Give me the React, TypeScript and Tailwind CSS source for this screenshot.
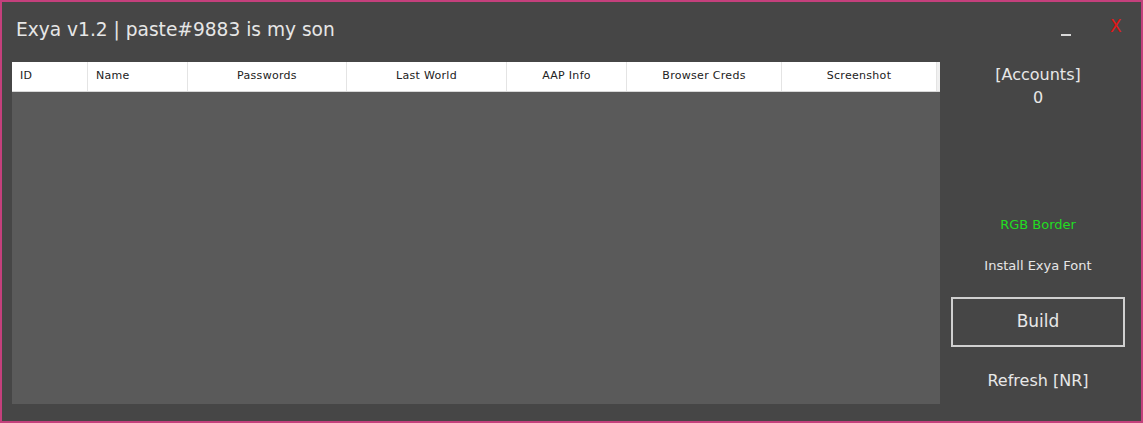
import React from "react";

const cols: [string, number, string][] = [
  ["ID", 76, "left"],
  ["Name", 100, "left"],
  ["Passwords", 159, "center"],
  ["Last World", 160, "center"],
  ["AAP Info", 120, "center"],
  ["Browser Creds", 155, "center"],
  ["Screenshot", 155, "center"],
];

export default function App() {
  return (
    <div
      className="w-[1143px] h-[423px] border-[2px] border-[#c4407c] bg-[#464646] flex flex-col text-[#e8e8e8] overflow-hidden"
      style={{ fontFamily: "'Century Gothic', 'DejaVu Sans', sans-serif" }}
    >
      <div className="h-[60px] flex items-start relative">
        <div className="pl-[14px] pt-[15px] text-[18.6px] text-[#e6e6e6] leading-[26px]">
          Exya v1.2 | paste#9883 is my son
        </div>
        <div className="absolute left-[1059px] top-[32px] w-[10px] h-[2px] bg-[#d8d8d8]" />
        <div className="absolute left-[1108px] top-[12px] text-[#e01818] text-[17px] leading-[24px]">X</div>
      </div>
      <div className="flex flex-1">
        <div className="ml-[10px] w-[928px] h-[342px] bg-[#5a5a5a] flex flex-col">
          <div className="h-[30px] bg-white flex text-[11px] tracking-[0.3px] text-[#222] border-b border-[#d8d8d8]">
            {cols.map(([name, w, align], i) => (
              <div
                key={i}
                className={
                  "h-full flex items-center border-r border-[#e4e4e4] " +
                  (align === "left" ? "justify-start pl-[8px]" : "justify-center")
                }
                style={{ width: w }}
              >
                {name}
              </div>
            ))}
            <div className="flex-1 bg-[#f0f0f0]" />
          </div>
        </div>
        <div className="flex-1 flex flex-col items-center pr-[5px]">
          <div className="text-[16px] leading-[23px] mt-[1px] text-center">
            <div>[Accounts]</div>
            <div>0</div>
          </div>
          <div className="mt-[108px] text-[13px] text-[#22dd22] leading-[16px]">RGB Border</div>
          <div className="mt-[25px] text-[13px] text-[#e6e6e6] leading-[16px]">Install Exya Font</div>
          <div className="mt-[23px] w-[174px] h-[50px] border-[2px] border-[#d0d0d0] flex items-center justify-center text-[17px]">
            Build
          </div>
          <div className="mt-[23px] text-[16px] leading-[22px]">Refresh [NR]</div>
        </div>
      </div>
    </div>
  );
}
